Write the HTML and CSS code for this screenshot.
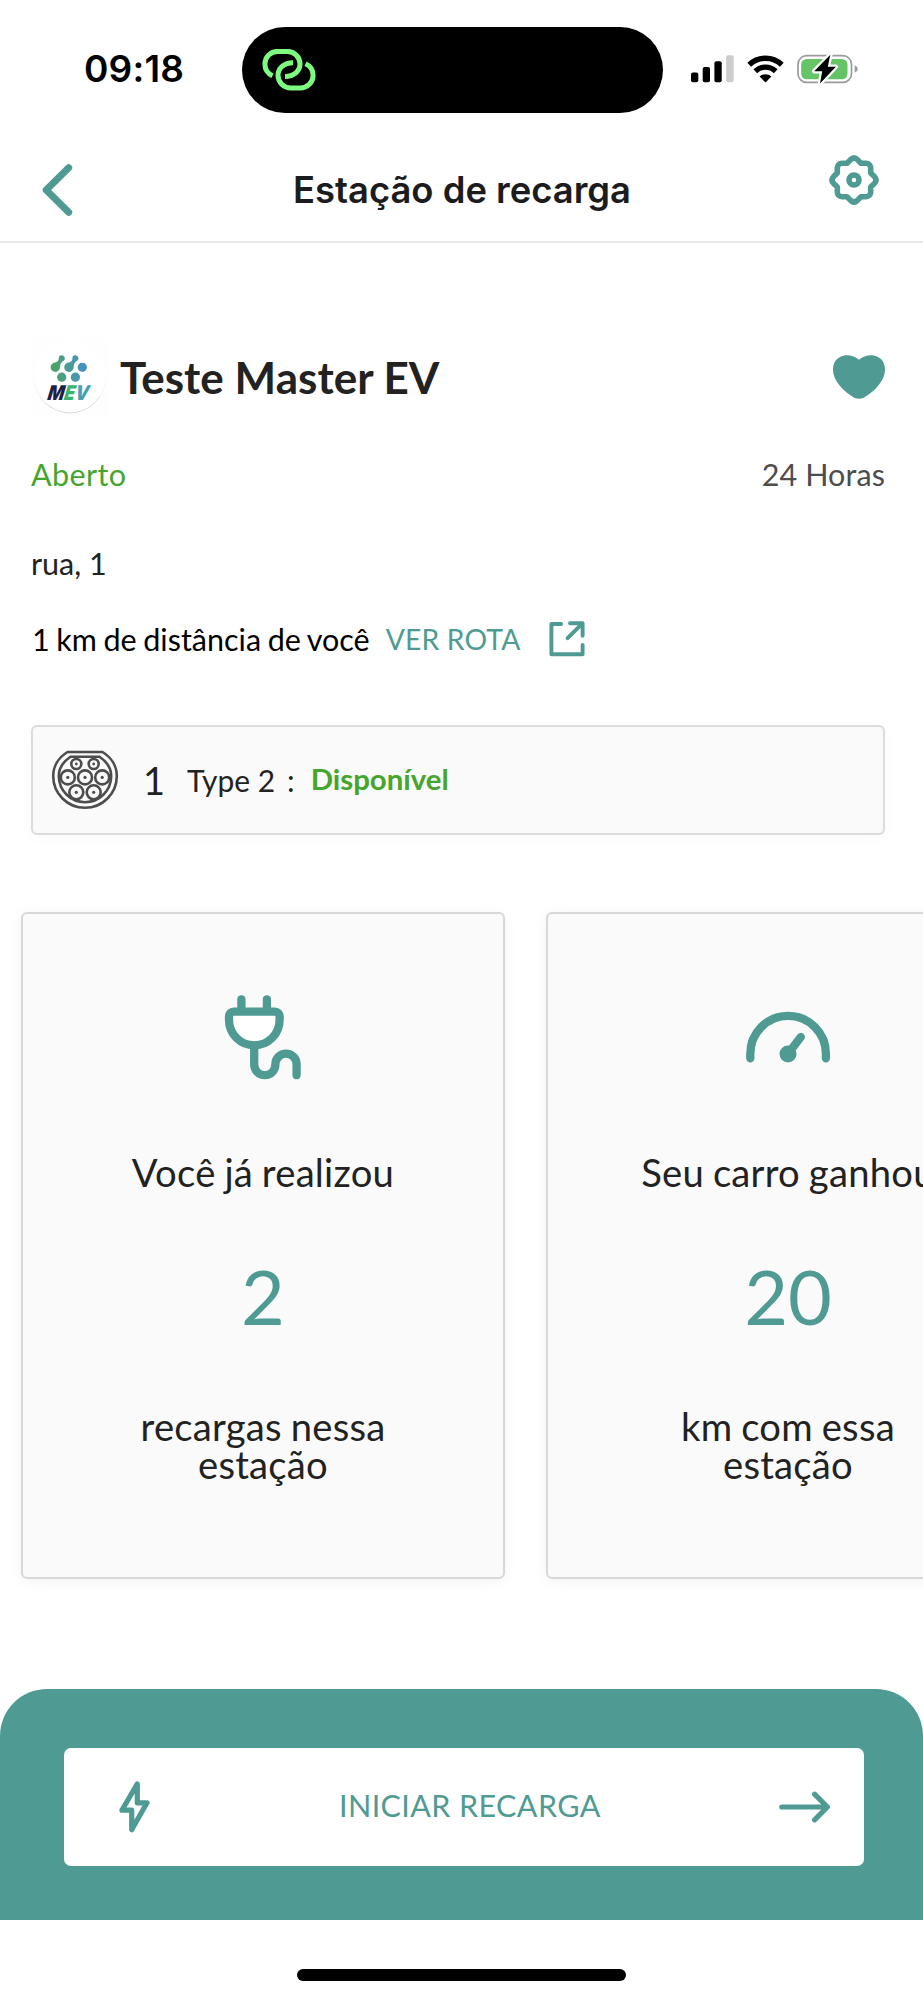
FILE: index.html
```
<!DOCTYPE html>
<html lang="pt-BR">
<head>
<meta charset="utf-8">
<title>Estação de recarga</title>
<link rel="stylesheet" href="styles.css">
</head>
<body>
<div class="screen">
  <div class="status">
    <span class="clock">09:18</span>
    <div class="island">
      <svg class="link-icon" width="54" height="42" viewBox="0 0 54 42">
        <path d="M10.5 26.7C5.8 24.6 2.9 20 2.9 15A12.7 12.7 0 0 1 15.6 2.4H25.3A12.7 12.7 0 0 1 38 15.1C38 22 32 27.6 23 27.6"/>
        <path d="M43.5 14.7C48.2 16.8 51.1 21.4 51.1 26.4A12.7 12.7 0 0 1 38.4 39H28.7A12.7 12.7 0 0 1 16 26.3C16 19.4 22 13.8 31 13.8"/>
      </svg>
    </div>
    <div class="indicators">
      <svg width="43" height="28" viewBox="0 0 43 28">
        <rect x="0" y="17.5" width="7.3" height="9.8" rx="2"/>
        <rect x="11.7" y="12" width="7.3" height="15.3" rx="2"/>
        <rect x="23.4" y="6.2" width="7.3" height="21.1" rx="2"/>
        <rect x="35.1" y="0.3" width="7.6" height="27" rx="2" fill="#ccc"/>
      </svg>
      <svg class="wifi" width="37" height="28" viewBox="0 0 37 28">
        <path d="M2.2 9.8A23.5 23.5 0 0 1 34.8 9.8" class="wave"/>
        <path d="M8.3 16.2A14.7 14.7 0 0 1 28.7 16.2" class="wave"/>
        <path d="M12.6 21.6A8.4 8.4 0 0 1 24.4 21.6L19.3 26.8Q18.5 27.5 17.7 26.8Z"/>
      </svg>
      <svg class="battery" width="62" height="32" viewBox="0 0 62 32">
        <rect x="1" y="2.7" width="53.5" height="26.7" rx="8.7" fill="none" stroke="#9b9b9b" stroke-width="1.7"/>
        <rect x="4.2" y="6" width="46.3" height="20.3" rx="5.5" fill="#65c466"/>
        <path d="M57.7 12.3Q60.8 13.5 60.8 16T57.7 19.8Z" fill="#9b9b9b"/>
        <path d="M33.3 1.8 17.2 18.2H25.2L23 30.6 38.9 13.8H30.8Z" class="bolt-cut"/>
        <path d="M33.3 1.8 17.2 18.2H25.2L23 30.6 38.9 13.8H30.8Z"/>
      </svg>
    </div>
  </div>

  <header class="nav">
    <svg class="back" width="32" height="54" viewBox="0 0 32 54"><path d="M27.7 4.8 5.2 27 27.7 49.2"/></svg>
    <h1 class="nav-title">Estação de recarga</h1>
    <svg class="gear" width="50" height="50" viewBox="-25 -25 50 50">
      <path d="M-7-16.7-3.4-20.4Q0-23.6 3.4-20.4L7-16.7H12.2A4.5 4.5 0 0 1 16.7-12.2V-7L20.4-3.4Q23.6 0 20.4 3.4L16.7 7V12.2A4.5 4.5 0 0 1 12.2 16.7H7L3.4 20.4Q0 23.6-3.4 20.4L-7 16.7H-12.2A4.5 4.5 0 0 1-16.7 12.2V7L-20.4 3.4Q-23.6 0-20.4-3.4L-16.7-7V-12.2A4.5 4.5 0 0 1-12.2-16.7Z"/>
      <circle r="5"/>
    </svg>
  </header>

  <main>
    <section class="station">
      <div class="row name-row">
        <svg class="logo" width="78" height="78" viewBox="0 0 78 78">
          <defs>
            <linearGradient id="dots" gradientUnits="userSpaceOnUse" x1="20" y1="30" x2="56" y2="30"><stop offset="0" stop-color="#4ba65c"/><stop offset=".5" stop-color="#4a9b9a"/><stop offset="1" stop-color="#458fca"/></linearGradient>
            <linearGradient id="vee" x1="0" x2="1"><stop offset="0" stop-color="#43b07c"/><stop offset=".6" stop-color="#48a0b2"/></linearGradient>
          </defs>
          <rect width="78" height="78" fill="#fefefe"/>
          <circle cx="39" cy="40" r="35.3" fill="#d2d2d2"/>
          <circle cx="39" cy="38.6" r="35.8" fill="#fff"/>
          <g fill="url(#dots)">
            <path d="M27.8 20.3A3 3 0 1 1 31.5 23.2Q29.3 25 29 29.3A4.7 4.7 0 1 1 24.3 24.6Q28 23.5 27.8 20.3Z"/>
            <path d="M41.4 20.3A3 3 0 1 1 45.1 23.2Q42.9 25 42.6 29.3A4.7 4.7 0 1 1 38 24.6Q41.6 23.5 41.4 20.3Z"/>
            <circle cx="51.3" cy="29.3" r="4.6"/><circle cx="30.7" cy="39.2" r="4.6"/><circle cx="44.4" cy="39.2" r="4.6"/>
          </g>
          <text transform="translate(16 61.7) skewX(-9)" textLength="41" lengthAdjust="spacingAndGlyphs" class="logo-text"><tspan fill="#1e1f49">M</tspan><tspan fill="#3db46d">E</tspan><tspan fill="url(#vee)">V</tspan></text>
        </svg>
        <h2 class="name">Teste Master EV</h2>
        <svg class="heart" width="52" height="44" viewBox="0 0 52 44"><path d="M26 4.8C20.5 0 12.5-1 7 2 1.5 5 0 10 0 15 0 25 10 36.5 21.7 43Q26 44.6 30.3 43C42 36.5 52 25 52 15 52 10 50.5 5 45 2 39.5-1 31.5 0 26 4.8Z"/></svg>
      </div>
      <div class="row hours-row"><span class="open">Aberto</span><span class="hours">24 Horas</span></div>
      <p class="address">rua, 1</p>
      <div class="row route-row">
        <span class="distance">1 km de distância de você</span>
        <a class="route">VER ROTA</a>
        <svg class="external" width="36" height="36" viewBox="0 0 36 36"><path d="M12.2 3H2.4V33.2H33.6V24M21 2.2H33.6V14.8M33.2 2.6 18.6 17.2"/></svg>
      </div>
    </section>

    <section class="connector">
      <svg class="plug-type" width="68" height="60" viewBox="-34 -26 68 60">
        <path d="M-17.5-24H17.5C26.5-18.5 31.8-9.5 31.8 0A31.8 31.8 0 0 1-31.8 0C-31.8-9.5-26.5-18.5-17.5-24Z"/>
        <path d="M-14.5-19.3H14.5C21.5-14.5 26.2-7.5 26.2 0A26.2 26.2 0 0 1-26.2 0C-26.2-7.5-21.5-14.5-14.5-19.3Z"/>
        <circle cx="-8.7" cy="-12" r="5"/><circle cx="8.7" cy="-12" r="5"/>
        <circle cx="-17.2" cy="1.4" r="7"/><circle cx="0" cy="1.4" r="7"/><circle cx="17.2" cy="1.4" r="7"/>
        <circle cx="-8.7" cy="16.3" r="7"/><circle cx="8.7" cy="16.3" r="7"/>
        <g class="pins"><circle cx="-8.7" cy="-12" r="1.4"/><circle cx="8.7" cy="-12" r="1.4"/><circle cx="-17.2" cy="1.4" r="1.6"/><circle cx="0" cy="1.4" r="1.6"/><circle cx="17.2" cy="1.4" r="1.6"/><circle cx="-8.7" cy="16.3" r="1.6"/><circle cx="8.7" cy="16.3" r="1.6"/></g>
      </svg>
      <span class="count">1</span>
      <span class="type">Type 2</span>
      <span class="colon">:</span>
      <span class="available">Disponível</span>
    </section>

    <section class="cards">
      <article class="card">
        <svg class="card-icon" width="84" height="95" viewBox="0 0 84 95"><path d="M20.4 9.3V20M45.9 9.3V20"/><path class="plug-body" d="M12.7 21.6H53.9A4.7 4.7 0 0 1 58.6 26.3V30A25.3 25.3 0 0 1 8 30V26.3A4.7 4.7 0 0 1 12.7 21.6Z"/><path d="M33.2 56V74.6A10.6 10.6 0 0 0 54.4 74.6V74.3A10.6 10.6 0 0 1 75.6 74.3V85.2"/></svg>
        <p class="card-text">Você já realizou</p>
        <p class="card-value">2</p>
        <p class="card-text">recargas nessa<br>estação</p>
      </article>
      <article class="card">
        <svg class="card-icon" width="86" height="95" viewBox="0 0 86 95"><path d="M5.3 68.3V63.7A37.8 37.8 0 0 1 80.9 63.7V68.3M43 63.7 55.8 47"/><circle cx="43" cy="64" r="8.5"/></svg>
        <p class="card-text">Seu carro ganhou</p>
        <p class="card-value">20</p>
        <p class="card-text">km com essa<br>estação</p>
      </article>
    </section>
  </main>

  <footer class="panel">
    <button class="start">
      <svg class="bolt" width="31" height="52" viewBox="0 0 31 52"><path d="M18.3 2.9V21.8H28L12.7 48.7V29.2H2.9Z"/></svg>
      <span class="start-label">INICIAR RECARGA</span>
      <svg class="arrow" width="52" height="32" viewBox="0 0 52 32"><path d="M2.8 16H47.5M35.6 3.2 48.4 16 35.6 28.8"/></svg>
    </button>
  </footer>
  <div class="home-bar"></div>
</div>
</body>
</html>
```
FILE: styles.css
```
* { box-sizing: border-box; }
body { margin: 0; background: #fff; }
h1, h2, p { margin: 0; font-weight: 400; }
svg { display: block; flex: none; }

.screen {
  width: 923px;
  height: 2000px;
  overflow: hidden;
  background: #fff;
  color: #222;
  font-family: Lato, sans-serif;
  font-size: 30.5px;
}

/* Status bar */
.status { display: flex; align-items: center; height: 138px; }
.clock {
  width: 158px;
  margin-left: 84px;
  font: 600 37px/40px Inter, sans-serif;
  letter-spacing: 0.2px;
  color: #000;
}
.island {
  display: flex;
  align-items: center;
  width: 421px;
  height: 86px;
  margin-top: 1px;
  padding-left: 20px;
  border-radius: 43px;
  background: #000;
}
.link-icon { fill: none; stroke: #7dfb7f; stroke-width: 5; }
.indicators { display: flex; align-items: center; margin-left: 28px; }
.wifi { margin-left: 13px; }
.wave { fill: none; stroke: #000; stroke-width: 5.4; }
.battery { margin-left: 13px; }
.bolt-cut { fill: #fff; stroke: #fff; stroke-width: 4.5; stroke-linejoin: round; }

/* Navigation bar */
.nav {
  display: flex;
  justify-content: space-between;
  height: 105px;
  padding: 0 44px 0 41px;
  border-bottom: 2px solid #e8e8ea;
}
.back, .gear, .external, .bolt, .arrow {
  fill: none;
  stroke: #4f9b94;
  stroke-linecap: round;
  stroke-linejoin: round;
}
.back { margin-top: 25px; stroke-width: 7; }
.nav-title {
  margin: 30px 0 0 22px;
  font: 600 36.4px/44px Inter, sans-serif;
  color: #1c1c1e;
}
.gear { margin-top: 17px; stroke-width: 5.6; }

/* Station details */
.station { padding: 95px 38px 0 31px; }
.row { display: flex; align-items: center; }
.name-row { height: 78px; }
.logo-text { font: italic 900 20.2px Inter, sans-serif; }
.name { margin-left: 11px; font-weight: 700; font-size: 44px; line-height: 50px; letter-spacing: 0.05px; }
.heart { margin-left: auto; fill: #4f9b94; }
.hours-row { justify-content: space-between; height: 40px; margin-top: 38px; }
.open { color: #44a62c; letter-spacing: 0.4px; }
.hours { color: #4d4d4d; letter-spacing: 0.1px; }
.address { margin-top: 49px; line-height: 40px; }
.route-row { height: 40px; margin-top: 36px; }
.distance { margin-left: 1px; line-height: 40px; word-spacing: -1.2px; color: #000; }
.route { margin-left: 16px; font-size: 28.3px; line-height: 40px; letter-spacing: 0.15px; color: #4f9b94; }
.external { margin-left: 28px; stroke-width: 3.9; }

/* Connector */
.connector {
  display: flex;
  align-items: center;
  height: 110px;
  margin: 66px 38px 0 31px;
  padding-left: 18px;
  border: 2px solid #dcdcdc;
  border-radius: 6px;
  background: #fafafa;
  box-shadow: 0 2px 18px rgba(0, 0, 0, 0.025);
}
.plug-type { fill: none; stroke: #4d4d4d; stroke-width: 2.6; }
.pins { fill: #4d4d4d; stroke: none; }
.count { margin-left: 24px; font-size: 38px; line-height: 40px; }
.type { margin-left: 22px; font-size: 29.9px; line-height: 40px; }
.colon { margin-left: 12px; }
.available { margin: -3px 0 0 16px; font-weight: 700; font-size: 29.4px; line-height: 40px; color: #44a62c; }

/* Statistics cards */
.cards { display: flex; gap: 41px; margin-top: 77px; padding-left: 21px; }
.card {
  display: flex;
  flex: none;
  flex-direction: column;
  align-items: center;
  width: 484px;
  height: 667px;
  padding-top: 76px;
  border: 2px solid #d8d8d8;
  border-radius: 6px;
  background: #fafafa;
  box-shadow: 0 2px 14px rgba(0, 0, 0, 0.05);
  text-align: center;
}
.card-icon { fill: none; stroke: #4f9b94; stroke-width: 8.3; stroke-linecap: round; }
.card-icon circle { fill: #4f9b94; stroke: none; }
.plug-body { fill: #fff; }
.card-text { margin-top: 68px; font-size: 38.2px; line-height: 38px; letter-spacing: 0.25px; word-spacing: -1.2px; }
.card-value { margin-top: 67px; font-size: 75.6px; line-height: 76px; color: #4f9b94; }
.card-value + .card-text { margin-top: 73px; }

/* Start action */
.panel {
  height: 231px;
  margin-top: 110px;
  padding: 59px 59px 0 64px;
  border-radius: 47px 47px 0 0;
  background: #4f9b94;
}
.start {
  display: flex;
  align-items: center;
  width: 100%;
  height: 118px;
  padding: 0 33px 0 55px;
  border: 0;
  border-radius: 7px;
  background: #fff;
  color: #4f9b94;
  font: 30.5px/40px Lato, sans-serif;
}
.bolt { stroke-width: 5.2; }
.start-label { margin: -4px 0 0 189px; letter-spacing: 0.4px; }
.arrow { margin-left: auto; stroke-width: 5.2; }
.home-bar { width: 329px; height: 12px; margin: 49px auto 0; border-radius: 6px; background: #000; }
```
